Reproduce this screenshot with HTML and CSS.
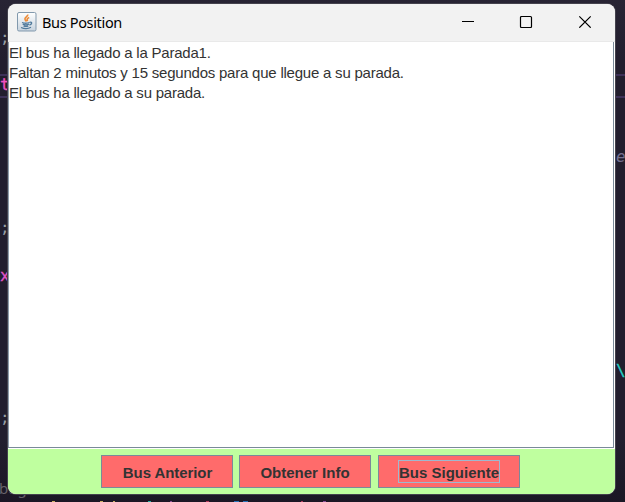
FILE: index.html
```html
<!DOCTYPE html>
<html lang="es">
<head>
<meta charset="utf-8">
<title>Bus Position</title>
<link rel="stylesheet" href="styles.css">
</head>
<body>
<div class="editor" aria-hidden="true">
  <div class="current-line"></div>
  <span class="code c1">;</span>
  <span class="code c2">t</span>
  <span class="code c3">;</span>
  <span class="code c4">x</span>
  <span class="code c5">;</span>
  <span class="code c6">e</span>
  <span class="code c7">\</span>
  <span class="code c8">bug</span>
  <svg class="next-line" width="625" height="1" viewBox="0 0 625 1">
    <path d="M52 .5h3M100 .5h3M113 .5h2" stroke="#c9b062"/>
    <path d="M148 .5h3" stroke="#25b8a8"/>
    <path d="M170 .5h2M323 .5h3" stroke="#8a4f98"/>
    <path d="M206 .5h3M301 .5h2" stroke="#b03a5c"/>
    <path d="M234 .5h5M243 .5h5" stroke="#2874b8"/>
  </svg>
</div>
<main class="window">
  <header class="titlebar">
    <svg class="app-icon" width="20" height="20" viewBox="0 0 20 20">
      <defs><linearGradient id="tile" x1="0" y1="0" x2="0" y2="1"><stop offset="0" stop-color="#fff"/><stop offset="1" stop-color="#c7d3de"/></linearGradient></defs>
      <rect x=".5" y=".5" width="18.5" height="18.5" rx="1.5" fill="url(#tile)" stroke="#8299ad"/>
      <path d="M10.700 2.500c.8 2-3.700 3-2.700 5 .3.7 1 1.200 1.300 2M12.200 5.500c-2.200 1-2.700 2-1.500 3.500" fill="none" stroke="#ed8a35" stroke-width="1.600"/>
      <path d="M5 10.500c2 .8 5.500.8 7.500 0M5.700 12.200c2 .8 4.500.8 6.300 0M6.500 13.900c1.500.6 3.500.6 4.800 0M12.700 10.300c2.800-.8 2.500 2-.3 2.800M4 15.500c3 1.300 7.500 1.200 10-.2" fill="none" stroke="#527b9c" stroke-width="1.300"/>
    </svg>
    <h1>Bus Position</h1>
    <svg class="controls" width="134" height="14" viewBox="0 0 134 14">
      <path d="M2 7.500h12" stroke="#000"/>
      <rect x="60.500" y="2.500" width="11" height="11" rx="1" fill="none" stroke="#000" stroke-width="1.200"/>
      <path d="M119.300 2.300l11.400 11.400M130.700 2.300L119.300 13.700" stroke="#000" stroke-width="1.200"/>
    </svg>
  </header>
  <section class="log">
    <p>El bus ha llegado a la Parada1.</p>
    <p>Faltan 2 minutos y 15 segundos para que llegue a su parada.</p>
    <p>El bus ha llegado a su parada.</p>
  </section>
  <footer class="actions">
    <button class="prev"><span>Bus Anterior</span></button>
    <button class="info"><span>Obtener Info</span></button>
    <button class="next"><span class="focus">Bus Siguiente</span></button>
  </footer>
</main>
</body>
</html>
```
FILE: styles.css
```css
* { box-sizing: border-box; }
body { margin: 0; width: 625px; height: 502px; overflow: hidden; position: relative; background: #221e2e; padding: 4px 0 0 8px; font-family: "Liberation Sans", sans-serif; }
.editor { position: absolute; inset: 0; overflow: hidden; background: linear-gradient(#282434, #221e2e 60px, #221e2e 440px, #1b1725); }
.current-line { position: absolute; left: 0; right: 0; top: 74px; height: 24px; border: solid #3d3158; border-width: 2px 0; }
.code { position: absolute; font: 16px/20px "DejaVu Sans Mono", monospace; white-space: pre; color: #9aa0a8; }
.c1 { left: 0; top: 28px; }
.c2 { left: 0; top: 75px; color: #f252c0; -webkit-text-stroke: .3px; }
.c3 { left: 0; top: 218px; }
.c4 { left: 0; top: 266px; color: #e055c8; -webkit-text-stroke: .3px; }
.c5 { left: 0; top: 408px; }
.c6 { left: 616px; top: 147px; color: #747090; font-style: italic; }
.c7 { left: 616px; top: 361px; color: #25d0c8; -webkit-text-stroke: .3px; }
.c8 { left: -1px; top: 478px; font: 15px/20px "Noto Sans", sans-serif; color: #66636b; }
.next-line { position: absolute; left: 0; bottom: 0; }
.window { position: relative; width: 607px; height: 490px; display: flex; flex-direction: column; border-radius: 8px; overflow: hidden; background: #fff; box-shadow: 0 0 0 1px #44424d; }
.titlebar { height: 38px; flex: none; display: flex; align-items: center; padding: 0 21px 0 9px; background: #f2f2f2; border-bottom: 1px solid #e9e9e9; }
.app-icon { margin-top: -2px; }
h1 { margin: -1px 0 0 5px; font: 14.500px/20px "Noto Sans", sans-serif; color: #000; letter-spacing: -.34px; }
.controls { margin-left: auto; margin-top: -3px; }
.log { flex: 1; margin: 0 1px 1px 0; padding: 1px 0 0 1px; border: solid #7a8a99; border-width: 0 1px 1px 0; box-shadow: inset 1px 0 #8f9dab; background: #fff; }
.log p { margin: 0; font-size: 15px; line-height: 20px; letter-spacing: -.22px; color: #333; white-space: nowrap; }
.actions { height: 45px; flex: none; display: flex; align-items: flex-start; padding: 6px 0 0 93px; background: #bfff9f; }
button { height: 33px; padding: 0; display: flex; justify-content: center; align-items: center; background: #ff6b6b; border: 1px solid #7a8a99; color: #333; font: bold 15px/21px "Liberation Sans", sans-serif; white-space: nowrap; }
button span { padding-top: 2px; }
.prev { width: 132px; padding-left: 1px; letter-spacing: -.08px; }
.info { width: 132px; margin: 0 7px 0 6px; }
.next { width: 142px; }
.focus { width: 102px; height: 23px; border: 1px solid #a0b8cf; text-align: center; padding-top: 1px; }
```
